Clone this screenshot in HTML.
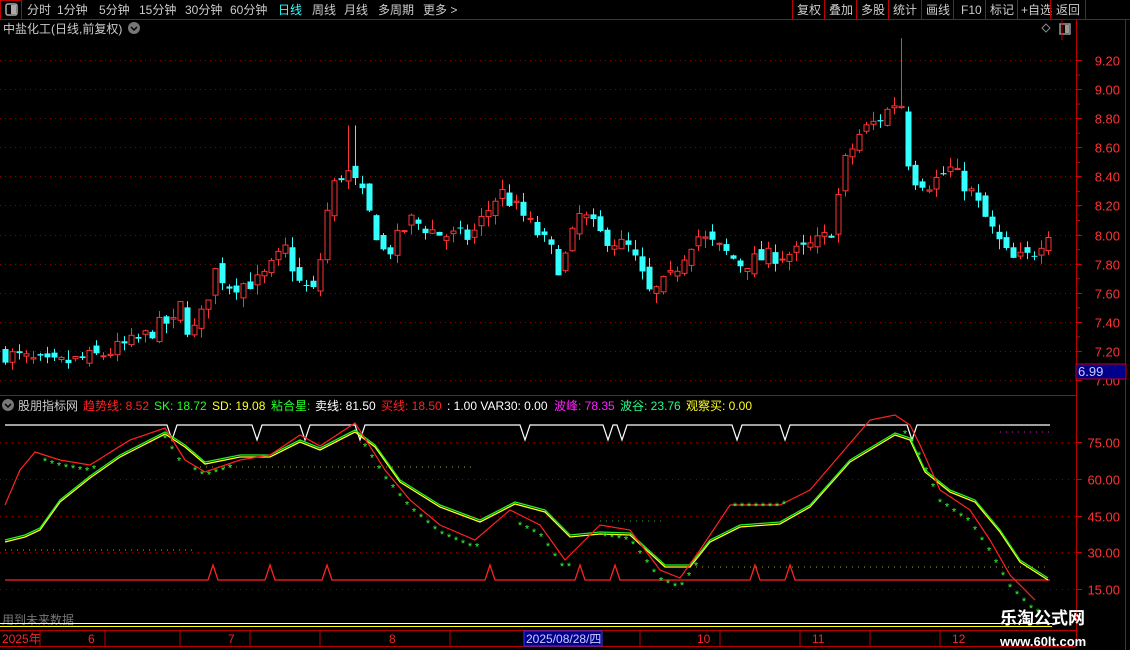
<!DOCTYPE html><html><head><meta charset="utf-8"><style>
body{margin:0;background:#000;width:1130px;height:650px;overflow:hidden;font-family:"Liberation Sans","Noto Sans CJK SC",sans-serif;}
svg{position:absolute;left:0;top:0}
text{font-family:"Liberation Sans","Noto Sans CJK SC",sans-serif}
</style></head><body>
<svg id="s" width="1130" height="650" xmlns="http://www.w3.org/2000/svg">
<rect width="1130" height="650" fill="#000"/>
<line x1="0" y1="19.5" x2="1130" y2="19.5" stroke="#b00" />
<rect x="0.5" y="0.5" width="21" height="19" fill="none" stroke="#b00"/>
<rect x="6" y="4" width="11" height="11" rx="2" fill="none" stroke="#aaa" stroke-width="1.5"/><rect x="11" y="5" width="5" height="9" fill="#aaa"/>
<g font-size="12" fill="#ccc">
<text x="27" y="14">分时</text><text x="57" y="14">1分钟</text><text x="99" y="14">5分钟</text><text x="139" y="14">15分钟</text><text x="185" y="14">30分钟</text><text x="230" y="14">60分钟</text>
<text x="278" y="14" fill="#3ff">日线</text><text x="312" y="14">周线</text><text x="344" y="14">月线</text><text x="378" y="14">多周期</text><text x="423" y="14">更多 &gt;</text>
<text x="797" y="14">复权</text><text x="829" y="14">叠加</text><text x="861" y="14">多股</text><text x="893" y="14">统计</text><text x="926" y="14">画线</text><text x="961" y="14">F10</text><text x="990" y="14">标记</text><text x="1021" y="14">+自选</text><text x="1056" y="14">返回</text>
</g>
<g stroke="#b00"><line x1="792.5" y1="0" x2="792.5" y2="19"/><line x1="824.5" y1="0" x2="824.5" y2="19"/><line x1="856.5" y1="0" x2="856.5" y2="19"/><line x1="888.5" y1="0" x2="888.5" y2="19"/><line x1="921.5" y1="0" x2="921.5" y2="19"/><line x1="953.5" y1="0" x2="953.5" y2="19"/><line x1="985.5" y1="0" x2="985.5" y2="19"/><line x1="1017.5" y1="0" x2="1017.5" y2="19"/><line x1="1050.5" y1="0" x2="1050.5" y2="19"/><line x1="1085.5" y1="0" x2="1085.5" y2="19"/><line x1="1125.5" y1="19" x2="1125.5" y2="650"/><line x1="1076.5" y1="19" x2="1076.5" y2="640"/></g>
<text x="3" y="33" font-size="12" fill="#ccc">中盐化工(日线,前复权)</text>
<circle cx="134" cy="28" r="6" fill="#777"/><path d="M131 27l3 3 3-3" stroke="#000" fill="none" stroke-width="1.5"/>
<path d="M1046 24l4 4-4 4-4-4z" fill="none" stroke="#888"/>
<rect x="1060" y="24" width="10" height="10" fill="none" stroke="#999" stroke-width="1.5"/><rect x="1065" y="25" width="4" height="8" fill="#999"/>
<line x1="1062" y1="19" x2="1062" y2="40" stroke="#b00"/>
<g id="main"></g>
<line x1="0" y1="395.5" x2="1076" y2="395.5" stroke="#b00"/>
<circle cx="8" cy="405" r="6" fill="#777"/><path d="M5 404l3 3 3-3" stroke="#000" fill="none" stroke-width="1.5"/>
<g font-size="12">
<text x="18" y="410" fill="#ccc">股朋指标网</text>
<text x="83" y="410" fill="#f22">趋势线: 8.52</text>
<text x="154" y="410" fill="#2f2">SK: 18.72</text>
<text x="212" y="410" fill="#ff2">SD: 19.08</text>
<text x="271" y="410" fill="#2f2">粘合星:</text>
<text x="315" y="410" fill="#fff">卖线: 81.50</text>
<text x="381" y="410" fill="#f22">买线: 18.50</text>
<text x="447" y="410" fill="#fff">: 1.00  VAR30: 0.00</text>
<text x="554" y="410" fill="#f2f">波峰: 78.35</text>
<text x="620" y="410" fill="#2f8">波谷: 23.76</text>
<text x="686" y="410" fill="#ff2">观察买: 0.00</text>
</g>
<g id="ind"></g>
<text x="2" y="624" font-size="12" fill="#777">用到未来数据</text>
<line x1="0" y1="623.5" x2="1052" y2="623.5" stroke="#fff"/>
<line x1="0" y1="626.5" x2="1052" y2="626.5" stroke="#ff0"/>
<line x1="0" y1="630.5" x2="1076" y2="630.5" stroke="#b00"/>
<line x1="0" y1="646.5" x2="1076" y2="646.5" stroke="#b00"/>
<g stroke="#b00"><line x1="40" y1="630" x2="40" y2="646"/><line x1="105" y1="630" x2="105" y2="646"/><line x1="180" y1="630" x2="180" y2="646"/><line x1="250" y1="630" x2="250" y2="646"/><line x1="320" y1="630" x2="320" y2="646"/><line x1="450" y1="630" x2="450" y2="646"/><line x1="530" y1="630" x2="530" y2="646"/><line x1="640" y1="630" x2="640" y2="646"/><line x1="720" y1="630" x2="720" y2="646"/><line x1="800" y1="630" x2="800" y2="646"/><line x1="870" y1="630" x2="870" y2="646"/><line x1="940" y1="630" x2="940" y2="646"/></g>
<g font-size="12" fill="#f22">
<text x="2" y="643">2025年</text><text x="88" y="643">6</text><text x="228" y="643">7</text><text x="389" y="643">8</text><text x="697" y="643">10</text><text x="812" y="643">11</text><text x="952" y="643">12</text></g>
<rect x="524" y="631" width="78" height="15" fill="#00008b" stroke="#33f"/>
<text x="526" y="643" font-size="12" fill="#ccf">2025/08/28/四</text>
<text x="1000" y="624" font-size="17" font-weight="bold" fill="#fff">乐淘公式网</text>
<text x="1000" y="646" font-size="13" font-weight="bold" fill="#fff" font-family="Liberation Serif">www.60lt.com</text>
</svg>
<script>
var NS="http://www.w3.org/2000/svg",M=document.getElementById('main'),I=document.getElementById('ind');
function el(p,t,a){var e=document.createElementNS(NS,t);for(var k in a)e.setAttribute(k,a[k]);p.appendChild(e);return e;}
function py(p){return 60+(9.2-p)*145.5;}
for(var v=9.2;v>=6.99;v-=0.2){var y=Math.round(py(v))+0.5;
el(M,'line',{x1:0,y1:y,x2:1076,y2:y,stroke:'#800','stroke-dasharray':'1 4'});
el(M,'line',{x1:1076,y1:y,x2:1082,y2:y,stroke:'#c00'});
var t=el(M,'text',{x:1120,y:y+5,'font-size':13,fill:'#f33','text-anchor':'end'});t.textContent=v.toFixed(2);}
for(var y=75;y<390;y+=14.55){el(M,'line',{x1:1076,y1:y,x2:1080,y2:y,stroke:'#c00'});}
el(M,'rect',{x:1076,y:364,width:50,height:15,fill:'#00008b',stroke:'#c00'});
var t=el(M,'text',{x:1078,y:376,'font-size':13,fill:'#ccf'});t.textContent='6.99';
var K=[[5,7.18],[50,7.1],[100,7.17],[140,7.28],[165,7.4],[172,7.35],[178,7.55],[190,7.3],[200,7.42],[215,7.75],[230,7.65],[260,7.68],[285,7.9],[300,7.65],[315,7.6],[330,8.3],[345,8.45],[360,8.3],[385,7.85],[410,8.1],[440,8.0],[470,7.98],[500,8.3],[520,8.15],[550,7.9],[560,7.75],[580,8.15],[600,8.0],[630,7.9],[650,7.58],[670,7.7],[695,8.0],[720,7.9],[740,7.8],[770,7.85],[800,7.88],[830,8.0],[845,8.5],[860,8.7],[880,8.8],[900,8.95],[910,8.4],[930,8.35],[950,8.45],[970,8.3],[990,8.05],[1010,7.82],[1030,7.85],[1050,8.05]];
function interp(A,x){for(var i=1;i<A.length;i++)if(x<=A[i][0]){var a=A[i-1],b=A[i],f=(x-a[0])/(b[0]-a[0]);return a[1]+f*(b[1]-a[1]);}return A[A.length-1][1];}
var seed=7;function rnd(){seed=(seed*16807)%2147483647;return seed/2147483647;}
var prev=interp(K,5);
for(var x=5;x<=1050;x+=7){var c=interp(K,x)+(rnd()-0.5)*0.12,o=prev+(rnd()-0.5)*0.08;
var hi=Math.max(o,c)+rnd()*0.07,lo=Math.min(o,c)-rnd()*0.07;
if(x==178){o=7.95;c=7.55;hi=7.95;lo=7.5;} if(x==355||x==348){hi=Math.max(hi,8.75);} if(x==901){hi=9.35;}
var up=c>=o,col=up?'#f33':'#3ff';var y1=py(Math.max(o,c)),y2=py(Math.min(o,c));
el(M,'line',{x1:x+0.5,y1:py(hi),x2:x+0.5,y2:py(lo),stroke:col});
if(up)el(M,'rect',{x:x-2,y:y1,width:5,height:Math.max(1,y2-y1),fill:'#000',stroke:col});
else el(M,'rect',{x:x-2.5,y:y1,width:6,height:Math.max(1,y2-y1),fill:col});
prev=c;}
function iy(v){return 442+(75-v)*2.45;}
[75,60,45,30,15].forEach(function(v){var y=Math.round(iy(v))+0.5;
el(I,'line',{x1:0,y1:y,x2:1076,y2:y,stroke:'#800','stroke-dasharray':'1 5'});
el(I,'line',{x1:1076,y1:y,x2:1082,y2:y,stroke:'#c00'});
var t=el(I,'text',{x:1120,y:y+5,'font-size':13,fill:'#f33','text-anchor':'end'});t.textContent=v.toFixed(2);});
function dots(x1,x2,y,c){el(I,'line',{x1:x1,y1:y,x2:x2,y2:y,stroke:c,'stroke-dasharray':'1 5'});}
dots(5,195,550,'#2c8');dots(200,475,467,'#aa2');dots(600,665,521,'#2a2');dots(690,1050,567,'#aa2');dots(1000,1050,432,'#c2c');
function pl(P,c,w){el(I,'polyline',{points:P.map(function(p){return p.join(',')}).join(' '),fill:'none',stroke:c,'stroke-width':w||1.3});}
var W=[],N=[172,257,305,360,525,608,622,737,785,912];W.push([5,425]);N.forEach(function(n){W.push([n-5,425],[n,440],[n+5,425]);});W.push([1050,425]);pl(W,'#fff',1.2);
var R=[[5,580]];[213,270,327,490,580,615,755,790].forEach(function(n){R.push([n-5,580],[n,565],[n+5,580]);});R.push([1050,580]);pl(R,'#f22',1.3);
var G=[[5,540],[25,535],[40,528],[60,500],[90,476],[120,455],[165,432],[185,445],[205,462],[240,455],[270,455],[300,440],[320,448],[355,430],[375,445],[400,480],[440,505],[480,520],[515,502],[545,510],[570,535],[600,532],[630,533],[665,565],[690,565],[710,540],[740,525],[780,522],[810,505],[850,460],[895,433],[910,438],[925,470],[950,490],[975,500],[1000,530],[1020,560],[1048,578]];
pl(G.map(function(p){return [p[0],p[1]+2]}),'#ff2',1.3);pl(G,'#2e2',1.3);
var RL=[[5,505],[20,470],[35,452],[60,460],[90,465],[130,440],[165,428],[185,460],[205,472],[240,460],[270,455],[300,435],[320,446],[355,423],[385,470],[410,500],[440,525],[475,540],[510,510],[540,525],[565,560],[600,525],[630,530],[660,570],[680,578],[700,550],[730,505],[780,505],[810,490],[840,455],[870,420],[895,415],[910,425],[920,445],[940,490],[970,510],[990,540],[1010,575],[1035,600]];
pl(RL,'#f22',1.2);
function stars(a,b,dy){for(var x=a;x<=b;x+=7){var t=el(I,'text',{x:x,y:interp(RL,x)+dy,'font-size':11,fill:'#3f3','text-anchor':'middle'});t.textContent='*';}}
stars(45,100,10);stars(165,185,14);stars(195,235,8);stars(365,480,12);stars(520,570,14);stars(605,700,14);stars(735,785,5);stars(905,1040,16);
</script>
</body></html>
